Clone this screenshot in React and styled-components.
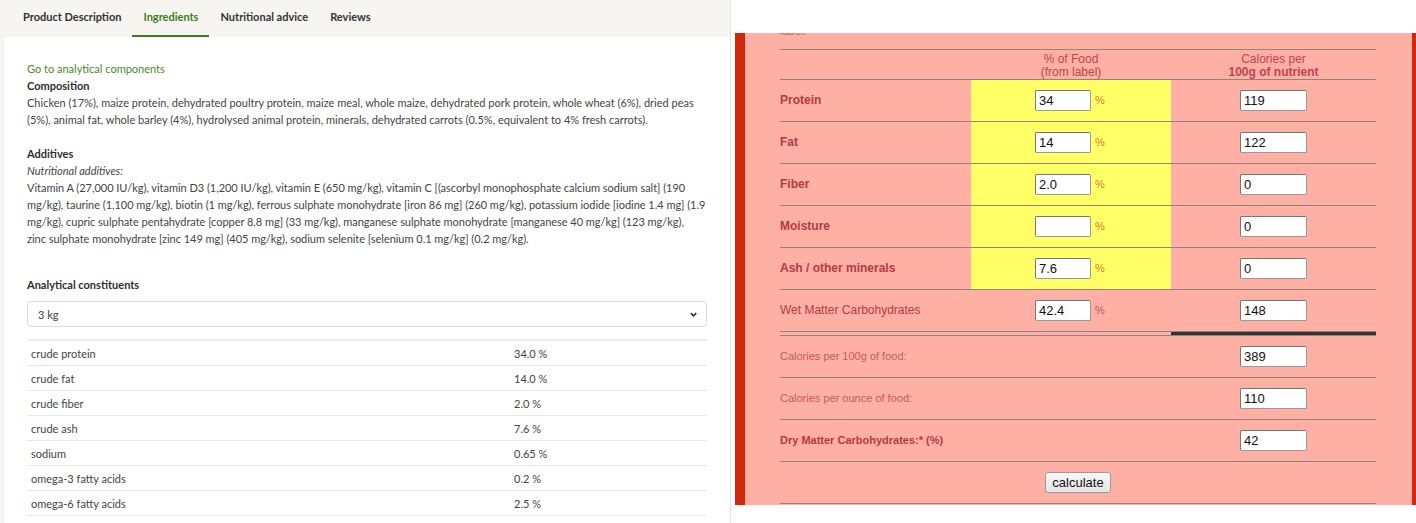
import * as React from "react";
import styled, { createGlobalStyle } from "styled-components";

const Global = createGlobalStyle`
  html, body {
    margin: 0;
    padding: 0;
    background: #fff;
    overflow: hidden;
  }
`;

const Page = styled.div`
  display: flex;
  align-items: flex-start;
  width: 1416px;
  height: 523px;
`;

/* ---------- product info column ---------- */

const Info = styled.div`
  width: 730px;
  height: 523px;
  border-right: 1px solid #e6e4e0;
  box-shadow: inset 3px 0 0 #f5f5f5, inset 4px 0 0 #ececec;
  font-family: Lato, "Noto Sans", sans-serif;
  color: #3a3a3a;
  flex-shrink: 0;
`;

const Tabs = styled.div`
  display: flex;
  height: 37px;
  padding-left: 12px;
  background: #f6f5f1;
`;

const Tab = styled.div`
  display: flex;
  align-items: center;
  padding: 0 11px 2px;
  font-size: 11px;
  font-weight: 700;
  color: ${p => (p.active ? "#3d7f1f" : "#333")};
  border-bottom: 2px solid ${p => (p.active ? "#3d7f1f" : "transparent")};
`;

const Content = styled.div`
  padding: 23px 23px 0 27px;
  font-size: 11px;
  line-height: 17px;
`;

const Link = styled.div`
  color: #4a8b2c;
`;

const Heading = styled.div`
  font-weight: 700;
  color: #2e2e2e;
  margin-top: ${p => p.gap || 0}px;
`;

const Para = styled.div`
  color: #444;
  font-style: ${p => (p.italic ? "italic" : "normal")};
  letter-spacing: ${p => (p.tight ? "-0.03px" : "normal")};
`;

const Select = styled.div`
  display: flex;
  align-items: center;
  justify-content: space-between;
  height: 24px;
  margin-top: 8px;
  padding: 0 8px 0 10px;
  border: 1px solid #dcdcdc;
  border-radius: 4px;
  color: #444;
`;

const Constituents = styled.div`
  margin-top: 12px;
  border-top: 2px solid #eeeeee;
`;

const ConstRow = styled.div`
  display: grid;
  grid-template-columns: 483px 1fr;
  height: 24px;
  align-items: center;
  padding-left: 4px;
  border-bottom: 1px solid #e6e6e6;
  color: #444;
`;

/* ---------- calorie calculator ---------- */

const Calc = styled.div`
  margin: 33px 0 0 4px;
  flex: 1;
  height: 472px;
  background: #ffb0a4;
  border-left: 10px solid #d3270a;
  border-right: 4px solid #d3270a;
  overflow: hidden;
  font-family: "Liberation Sans", Arial, sans-serif;
  font-size: 12px;
  color: #b33a45;
`;

const Caption = styled.div`
  margin: -8px 0 0 35px;
  height: 24px;
  line-height: 12px;
  font-size: 11px;
  color: #c0606a;
`;

const Table = styled.table`
  margin-left: 35px;
  width: 596px;
  border-collapse: collapse;
  table-layout: fixed;
`;

const Row = styled.tr`
  height: ${p => p.h || 42}px;
  border-top: 1px solid #948280;
`;

const Cell = styled.td`
  padding: 0;
  text-align: ${p => p.align || "center"};
  background: ${p => (p.yellow ? "#ffff66" : "transparent")};
  font-weight: ${p => (p.bold ? 700 : 400)};
  font-size: ${p => p.size || 12}px;
  color: ${p => p.color || "inherit"};
  line-height: 13px;
  vertical-align: middle;
`;

const HeadCell = styled(Cell)`
  vertical-align: top;
  padding-top: 3px;
  color: #c04450;
`;

const Input = styled.span`
  display: inline-block;
  box-sizing: border-box;
  width: ${p => p.w}px;
  height: 21px;
  padding: 2px 3px;
  text-align: left;
  vertical-align: middle;
  background: #fff;
  border: 1px solid #999;
  border-top-color: #777;
  border-left-color: #777;
  border-radius: 2px;
  font-family: "Liberation Sans", Arial, sans-serif;
  font-size: 13px;
  font-weight: 400;
  line-height: 15px;
  color: #111;
`;

const Percent = styled.span`
  display: inline-block;
  width: 12px;
  margin-left: 4px;
  text-align: left;
  vertical-align: middle;
  font-size: 11px;
  font-weight: 400;
  color: ${p => (p.yellow ? "#d27a3a" : "#d0486a")};
`;

const Divider = styled.tr`
  height: 4px;
  border-top: 1px solid #948280;
  td {
    padding: 0;
  }
`;

const Thick = styled.td`
  background: #333;
`;

const ThinPair = styled.td`
  border-bottom: 1px solid #948280;
`;

const Button = styled.span`
  display: inline-block;
  padding: 2px 6px;
  background: linear-gradient(#f8f8f8, #e4e4e4);
  border: 1px solid #9a9a9a;
  border-radius: 3px;
  color: #111;
  font-size: 13px;
  line-height: 15px;
`;

const ingredientsText =
  "Chicken (17%), maize protein, dehydrated poultry protein, maize meal, whole maize, dehydrated pork protein, whole wheat (6%), dried peas (5%), animal fat, whole barley (4%), hydrolysed animal protein, minerals, dehydrated carrots (0.5%, equivalent to 4% fresh carrots).";

const additivesLines = [
  "Vitamin A (27,000 IU/kg), vitamin D3 (1,200 IU/kg), vitamin E (650 mg/kg), vitamin C [(ascorbyl monophosphate calcium sodium salt] (190",
  "mg/kg), taurine (1,100 mg/kg), biotin (1 mg/kg), ferrous sulphate monohydrate [iron 86 mg] (260 mg/kg), potassium iodide [iodine 1.4 mg] (1.9",
  "mg/kg), cupric sulphate pentahydrate [copper 8,8 mg] (33 mg/kg), manganese sulphate monohydrate [manganese 40 mg/kg] (123 mg/kg),",
  "zinc sulphate monohydrate [zinc 149 mg] (405 mg/kg), sodium selenite [selenium 0.1 mg/kg] (0.2 mg/kg).",
];

const constituents = [
  ["crude protein", "34.0 %"],
  ["crude fat", "14.0 %"],
  ["crude fiber", "2.0 %"],
  ["crude ash", "7.6 %"],
  ["sodium", "0.65 %"],
  ["omega-3 fatty acids", "0.2 %"],
  ["omega-6 fatty acids", "2.5 %"],
];

const nutrients = [
  ["Protein", "34", "119"],
  ["Fat", "14", "122"],
  ["Fiber", "2.0", "0"],
  ["Moisture", "", "0"],
  ["Ash / other minerals", "7.6", "0"],
];

const totals = [
  ["Calories per 100g of food:", "389", false],
  ["Calories per ounce of food:", "110", false],
  ["Dry Matter Carbohydrates:* (%)", "42", true],
];

const Chevron = () => (
  <svg width="9" height="9" viewBox="0 0 10 10">
    <path d="M2 3.5 L5 6.5 L8 3.5" fill="none" stroke="#333" strokeWidth="1.8" />
  </svg>
);

export default function App() {
  return (
    <Page>
      <Global />
      <Info>
        <Tabs>
          <Tab>Product Description</Tab>
          <Tab active>Ingredients</Tab>
          <Tab>Nutritional advice</Tab>
          <Tab>Reviews</Tab>
        </Tabs>
        <Content>
          <Link>Go to analytical components</Link>
          <Heading>Composition</Heading>
          <Para>{ingredientsText}</Para>
          <Heading gap={17}>Additives</Heading>
          <Para italic>Nutritional additives:</Para>
          <Para tight>
            {additivesLines.map((line, i) => (
              <React.Fragment key={i}>
                {line}
                {i < additivesLines.length - 1 && <br />}
              </React.Fragment>
            ))}
          </Para>
          <Heading gap={29}>Analytical constituents</Heading>
          <Select>
            <span>3 kg</span>
            <Chevron />
          </Select>
          <Constituents>
            {constituents.map(([name, value]) => (
              <ConstRow key={name}>
                <span>{name}</span>
                <span>{value}</span>
              </ConstRow>
            ))}
          </Constituents>
        </Content>
      </Info>

      <Calc>
        <Caption>label:</Caption>
        <Table>
          <colgroup>
            <col style={{ width: 191 }} />
            <col style={{ width: 200 }} />
            <col style={{ width: 205 }} />
          </colgroup>
          <tbody>
            <Row h={30}>
              <HeadCell />
              <HeadCell>
                % of Food
                <br />
                (from label)
              </HeadCell>
              <HeadCell>
                Calories per
                <br />
                <b>100g of nutrient</b>
              </HeadCell>
            </Row>
            {nutrients.map(([name, pct, cal]) => (
              <Row key={name}>
                <Cell align="left" bold>{name}</Cell>
                <Cell yellow>
                  <Input w={56}>{pct}</Input>
                  <Percent yellow>%</Percent>
                </Cell>
                <Cell>
                  <Input w={67}>{cal}</Input>
                </Cell>
              </Row>
            ))}
            <Row>
              <Cell align="left">Wet Matter Carbohydrates</Cell>
              <Cell>
                <Input w={56}>42.4</Input>
                <Percent>%</Percent>
              </Cell>
              <Cell>
                <Input w={67}>148</Input>
              </Cell>
            </Row>
            <Divider>
              <ThinPair />
              <ThinPair />
              <Thick />
            </Divider>
            {totals.map(([label, value, bold]) => (
              <Row key={label}>
                <Cell colSpan={2} align="left" size={11} bold={bold} color={bold ? "#b33a45" : "#c65a60"}>
                  {label}
                </Cell>
                <Cell>
                  <Input w={67}>{value}</Input>
                </Cell>
              </Row>
            ))}
            <Row>
              <Cell colSpan={3}>
                <Button>calculate</Button>
              </Cell>
            </Row>
            <Row h={1}>
              <Cell colSpan={3} />
            </Row>
          </tbody>
        </Table>
      </Calc>
    </Page>
  );
}
